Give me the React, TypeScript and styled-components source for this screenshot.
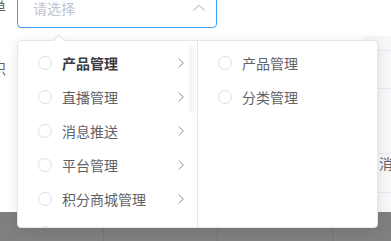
import React from "react";
import styled, { createGlobalStyle } from "styled-components";

const Global = createGlobalStyle`
  html, body { margin: 0; padding: 0; background: #ffffff; }
  body { font-family: "Noto Sans CJK SC", "Noto Sans", sans-serif; }
  * { box-sizing: border-box; }
`;

const Stage = styled.div`
  position: relative;
  width: 391px;
  height: 241px;
  overflow: hidden;
  background: #ffffff;
  display: flex;
  flex-direction: column;
`;

const FormArea = styled.div`
  height: 212px;
  display: flex;
  flex-shrink: 0;
`;

const LeftForm = styled.div`
  width: 217px;
  display: flex;
  flex-direction: column;
  gap: 22px;
  margin-top: -12px;
`;

const FormRow = styled.div`
  display: grid;
  grid-template-columns: 6px 200px;
  column-gap: 11px;
  height: 40px;
  align-items: center;
`;

const Label = styled.div<{ $shift?: number }>`
  width: 6px;
  display: flex;
  justify-content: flex-end;
  white-space: nowrap;
  font-size: 14px;
  color: #606266;
  transform: translateY(${(p) => p.$shift ?? 0}px);
`;

const SelectBox = styled.div`
  height: 40px;
  border: 1px solid #409eff;
  border-radius: 4px;
  display: flex;
  align-items: center;
  padding: 0 10px 0 15px;
  font-size: 14px;
  color: #c0c4cc;
  background: #fff;
`;

const Placeholder = styled.span`
  flex: 1;
`;

const RightForm = styled.div`
  margin-left: 147px;
  flex: 1;
  display: flex;
  flex-direction: column;
  padding-top: 50px;
  background: linear-gradient(#ffffff 0, #ffffff 36px, #f6f7f9 36px);
`;

const Cell = styled.div<{ $h: number }>`
  height: ${(p) => p.$h}px;
  border-top: 1px solid #e6e8ee;
  padding: 0 15px;
  font-size: 14px;
  line-height: 18px;
  color: #606266;
  white-space: nowrap;
  flex-shrink: 0;
`;

const Footer = styled.div`
  flex: 1;
  background: #7f7f7f;
  display: grid;
  grid-template-columns: 103px 114px 115px 1fr;
`;

const FootCell = styled.div<{ $line?: boolean }>`
  border-left: ${(p) => (p.$line ? "1px solid #747474" : "none")};
`;

const Panel = styled.div`
  position: absolute;
  left: 17px;
  top: 40px;
  width: 361px;
  height: 188px;
  background: #fff;
  border: 1px solid #e4e7ed;
  border-radius: 4px;
  box-shadow: 0 2px 12px rgba(0, 0, 0, 0.1);
  display: flex;

  &::before {
    content: "";
    position: absolute;
    left: 35px;
    top: -13px;
    border: 6px solid transparent;
    border-bottom-color: #e4e7ed;
  }
  &::after {
    content: "";
    position: absolute;
    left: 35px;
    top: -11px;
    border: 6px solid transparent;
    border-bottom-color: #fff;
  }
`;

const Menu = styled.div<{ $divider?: boolean }>`
  position: relative;
  width: 180px;
  height: 100%;
  overflow: hidden;
  padding: 5px 0;
  border-right: ${(p) => (p.$divider ? "1px solid #e4e7ed" : "none")};
  flex-shrink: 0;
`;

const Thumb = styled.div`
  position: absolute;
  right: 3px;
  top: 5px;
  width: 5px;
  height: 67px;
  border-radius: 3px;
  background: #f5f6f8;
`;

const Item = styled.div<{ $active?: boolean }>`
  position: relative;
  height: 34px;
  padding: 0 30px 0 20px;
  display: flex;
  align-items: center;
  font-size: 14px;
  color: ${(p) => (p.$active ? "#3a3b3e" : "#606266")};
  font-weight: ${(p) => (p.$active ? 700 : 400)};
  white-space: nowrap;
`;

const Radio = styled.span`
  width: 14px;
  height: 14px;
  border: 1px solid #dcdfe6;
  border-radius: 50%;
  margin-right: 10px;
  flex-shrink: 0;
`;

const Chevron = styled.svg`
  position: absolute;
  right: 10px;
  top: 11px;
`;

const ArrowUp = () => (
  <svg width="14" height="14" viewBox="0 0 14 14">
    <path d="M1.5 9.5 L7 4.2 L12.5 9.5" fill="none" stroke="#c0c4cc" strokeWidth="1.1" />
  </svg>
);

const Right = () => (
  <Chevron width="12" height="12" viewBox="0 0 12 12">
    <path d="M3.8 1.5 L8.3 6 L3.8 10.5" fill="none" stroke="#8c8f96" strokeWidth="1" />
  </Chevron>
);

const level1 = ["产品管理", "直播管理", "消息推送", "平台管理", "积分商城管理", "系统设置"];
const level2 = ["产品管理", "分类管理"];

export default function App() {
  return (
    <>
      <Global />
      <Stage>
        <FormArea>
          <LeftForm>
            <FormRow>
              <Label $shift={-2}>上级菜单</Label>
              <SelectBox>
                <Placeholder>请选择</Placeholder>
                <ArrowUp />
              </SelectBox>
            </FormRow>
            <FormRow>
              <Label $shift={-2}>权限标识</Label>
              <div />
            </FormRow>
          </LeftForm>
          <RightForm>
            <Cell $h={38} />
            <Cell $h={65} />
            <Cell $h={39}>消息推送</Cell>
            <Cell $h={20} />
          </RightForm>
        </FormArea>
        <Footer>
          <FootCell />
          <FootCell $line />
          <FootCell $line />
          <FootCell $line />
        </Footer>
        <Panel>
          <Menu $divider>
            <Thumb />
            {level1.map((t, i) => (
              <Item key={t} $active={i === 0}>
                <Radio />
                {t}
                <Right />
              </Item>
            ))}
          </Menu>
          <Menu>
            {level2.map((t) => (
              <Item key={t}>
                <Radio />
                {t}
              </Item>
            ))}
          </Menu>
        </Panel>
      </Stage>
    </>
  );
}
